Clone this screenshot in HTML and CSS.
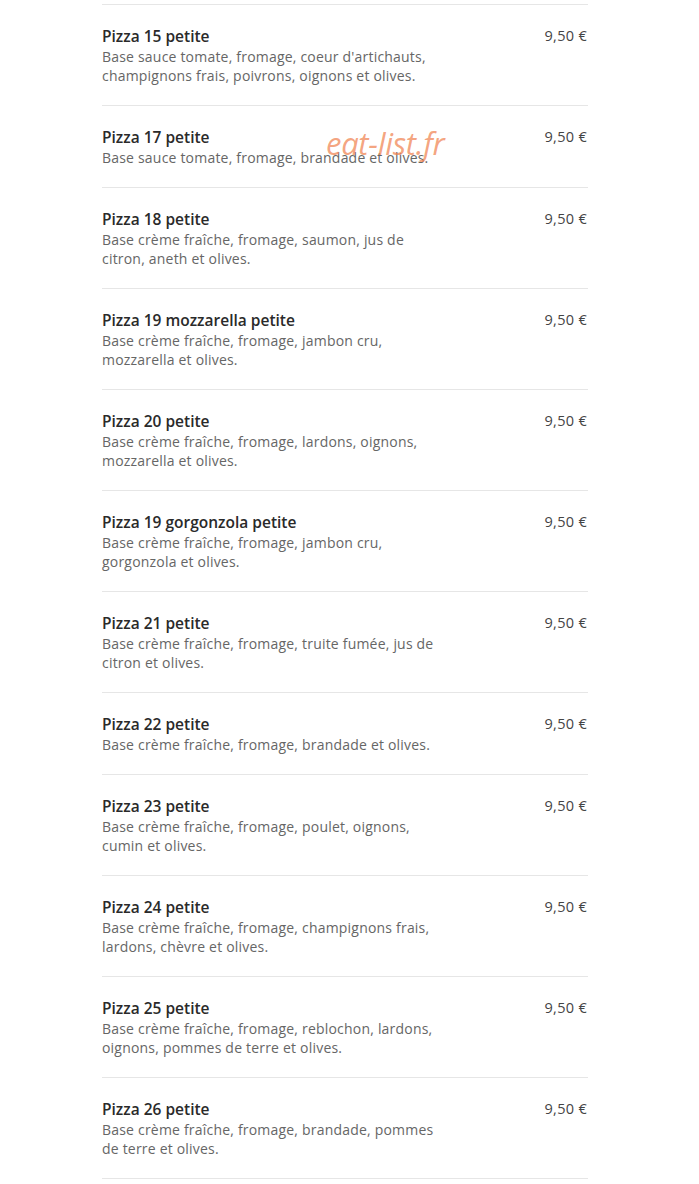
FILE: index.html
```html
<!DOCTYPE html>
<html lang="fr">
<head>
	<meta charset="UTF-8">
	<meta name="viewport" content="width=device-width, initial-scale=1.0">
	<title>Pizzas petites</title>
	<link rel="stylesheet" href="styles.css">
</head>
<body>
<div class="menu">
	<span class="watermark">eat-list.fr</span>
	<ul class="items">
		<li class="item">
			<div class="info">
				<h3 class="name">Pizza 15 petite</h3>
				<p class="desc">Base sauce tomate, fromage, coeur d'artichauts, champignons frais, poivrons, oignons et olives.</p>
			</div>
			<span class="price">9,50 €</span>
		</li>
		<li class="item">
			<div class="info">
				<h3 class="name">Pizza 17 petite</h3>
				<p class="desc">Base sauce tomate, fromage, brandade et olives.</p>
			</div>
			<span class="price">9,50 €</span>
		</li>
		<li class="item">
			<div class="info">
				<h3 class="name">Pizza 18 petite</h3>
				<p class="desc">Base crème fraîche, fromage, saumon, jus de citron, aneth et olives.</p>
			</div>
			<span class="price">9,50 €</span>
		</li>
		<li class="item">
			<div class="info">
				<h3 class="name">Pizza 19 mozzarella petite</h3>
				<p class="desc">Base crème fraîche, fromage, jambon cru, mozzarella et olives.</p>
			</div>
			<span class="price">9,50 €</span>
		</li>
		<li class="item">
			<div class="info">
				<h3 class="name">Pizza 20 petite</h3>
				<p class="desc">Base crème fraîche, fromage, lardons, oignons, mozzarella et olives.</p>
			</div>
			<span class="price">9,50 €</span>
		</li>
		<li class="item">
			<div class="info">
				<h3 class="name">Pizza 19 gorgonzola petite</h3>
				<p class="desc">Base crème fraîche, fromage, jambon cru, gorgonzola et olives.</p>
			</div>
			<span class="price">9,50 €</span>
		</li>
		<li class="item">
			<div class="info">
				<h3 class="name">Pizza 21 petite</h3>
				<p class="desc">Base crème fraîche, fromage, truite fumée, jus de citron et olives.</p>
			</div>
			<span class="price">9,50 €</span>
		</li>
		<li class="item">
			<div class="info">
				<h3 class="name">Pizza 22 petite</h3>
				<p class="desc">Base crème fraîche, fromage, brandade et olives.</p>
			</div>
			<span class="price">9,50 €</span>
		</li>
		<li class="item">
			<div class="info">
				<h3 class="name">Pizza 23 petite</h3>
				<p class="desc">Base crème fraîche, fromage, poulet, oignons, cumin et olives.</p>
			</div>
			<span class="price">9,50 €</span>
		</li>
		<li class="item">
			<div class="info">
				<h3 class="name">Pizza 24 petite</h3>
				<p class="desc">Base crème fraîche, fromage, champignons frais, lardons, chèvre et olives.</p>
			</div>
			<span class="price">9,50 €</span>
		</li>
		<li class="item">
			<div class="info">
				<h3 class="name">Pizza 25 petite</h3>
				<p class="desc">Base crème fraîche, fromage, reblochon, lardons, oignons, pommes de terre et olives.</p>
			</div>
			<span class="price">9,50 €</span>
		</li>
		<li class="item">
			<div class="info">
				<h3 class="name">Pizza 26 petite</h3>
				<p class="desc">Base crème fraîche, fromage, brandade, pommes de terre et olives.</p>
			</div>
			<span class="price">9,50 €</span>
		</li>
	</ul>
</div>
</body>
</html>
```

FILE: styles.css
```css
body {
	margin: 0;
	background: #fff;
	font-family: "Open Sans", "Noto Sans", sans-serif;
}
.menu {
	position: relative;
	width: 486px;
	margin-left: 102px;
	padding-top: 4px;
}
.menu > .watermark {
	position: absolute;
	left: 224px;
	top: 122px;
	font-size: 31px;
	font-style: italic;
	color: rgba(240, 130, 80, 0.72);
	letter-spacing: -0.3px;
	pointer-events: none;
}
.items {
	margin: 0;
	padding: 0;
	list-style: none;
}
.items > .item {
	display: flex;
	justify-content: space-between;
	align-items: flex-start;
	padding: 21px 0 20px;
	border-top: 1px solid #e6e6e6;
}
.items > .item:last-child {
	border-bottom: 1px solid #e6e6e6;
}
.item > .info {
	width: 345px;
}
.item .name {
	margin: 0;
	font-size: 15.5px;
	font-weight: 600;
	line-height: 20px;
	color: #2a2a2a;
}
.item .desc {
	margin: 1px 0 0;
	font-size: 14px;
	line-height: 19px;
	letter-spacing: 0.2px;
	color: #666;
}
.item > .price {
	font-size: 14.5px;
	line-height: 20px;
	letter-spacing: 0.3px;
	color: #444;
	padding-right: 1px;
}
```
